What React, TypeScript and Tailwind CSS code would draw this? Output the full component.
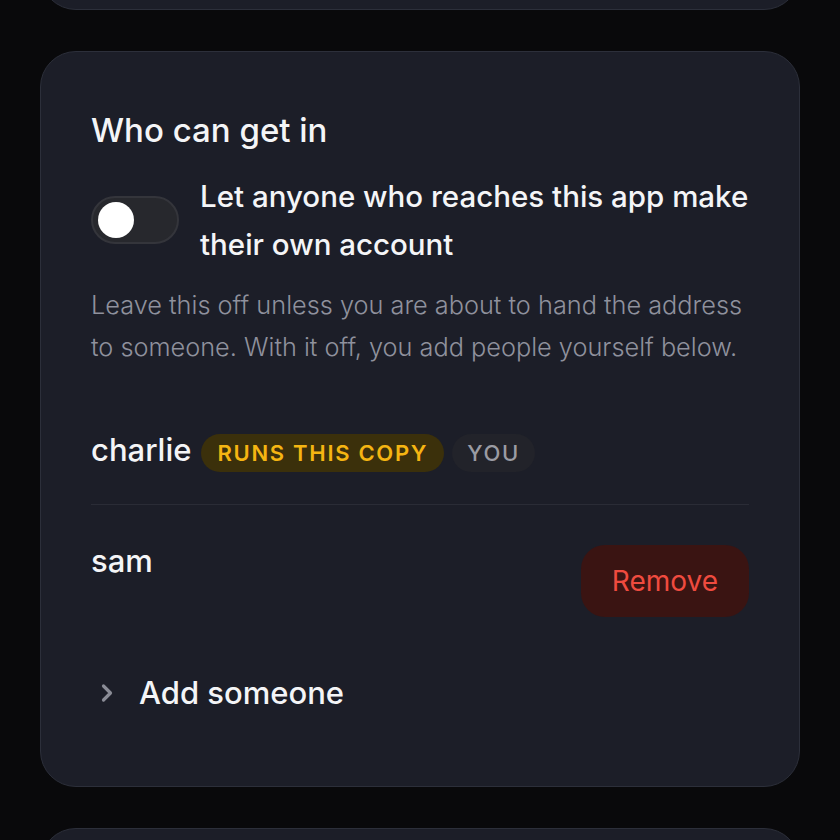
import React from "react";

export default function App() {
  return (
    <div
      className="h-[840px] w-[840px] overflow-hidden bg-[#09090b] px-10"
      style={{ fontFamily: "Inter, 'Noto Sans', sans-serif" }}
    >
      <div className="flex flex-col gap-[41px]">
        <div className="-mt-[90px] h-[100px] rounded-[36px] border border-[#2c2f3a] bg-[#1c1e28]" />

        <div className="rounded-[36px] border border-[#2c2f3a] bg-[#1c1e28] px-[50px] pt-[58px] pb-[73px]">
          <h2 className="text-[33px] leading-[40px] font-medium text-[#f4f5f7]">Who can get in</h2>

          <div className="mt-[22px] flex items-center gap-[21px]">
            <button className="flex h-[48px] w-[88px] shrink-0 items-center rounded-full border-2 border-[#34353b] bg-[#27282d] pl-[5px]">
              <span className="block h-[36px] w-[36px] rounded-full bg-white" />
            </button>
            <div className="text-[29.5px] leading-[48px] font-medium text-[#f4f5f7]">
              Let anyone who reaches this app make their own account
            </div>
          </div>

          <p className="mt-[16px] text-[25.3px] leading-[42px] font-light text-[#8f919d]">
            Leave this off unless you are about to hand the address to someone. With it off, you add people yourself below.
          </p>

          <div className="mt-[60px] flex items-center border-b border-[#2a2c36] pb-[32px]">
            <span className="text-[31px] leading-[40px] font-medium text-[#f4f5f7]">charlie</span>
            <span className="ml-[10px] mt-[6px] rounded-full bg-[#3b300b] px-[16px] text-[22px] leading-[38px] font-semibold tracking-[1.7px] text-[#f5b512]">
              RUNS THIS COPY
            </span>
            <span className="ml-[8px] mt-[6px] rounded-full bg-[#22232a] px-[15px] text-[22px] leading-[38px] font-medium tracking-[1.7px] text-[#9a9ba3]">
              YOU
            </span>
          </div>

          <div className="flex items-start justify-between pt-[40px]">
            <span className="text-[31px] leading-[32px] font-medium text-[#f4f5f7]">sam</span>
            <button className="h-[72px] rounded-[24px] bg-[#3a1412] px-[31px] text-[28px] font-normal text-[#ef4b3f]">
              Remove
            </button>
          </div>

          <div className="mt-[56px] flex items-center gap-[20px]">
            <svg width="24" height="24" viewBox="0 0 24 24" className="ml-[4px]" fill="none" stroke="#8a8c96" strokeWidth="3.2" strokeLinecap="round" strokeLinejoin="round">
              <path d="M8.5 5l7 7-7 7" />
            </svg>
            <span className="text-[31px] leading-[40px] font-medium text-[#f4f5f7]">Add someone</span>
          </div>
        </div>

        <div className="h-[100px] rounded-[36px] border border-[#2c2f3a] bg-[#1c1e28]" />
      </div>
    </div>
  );
}
